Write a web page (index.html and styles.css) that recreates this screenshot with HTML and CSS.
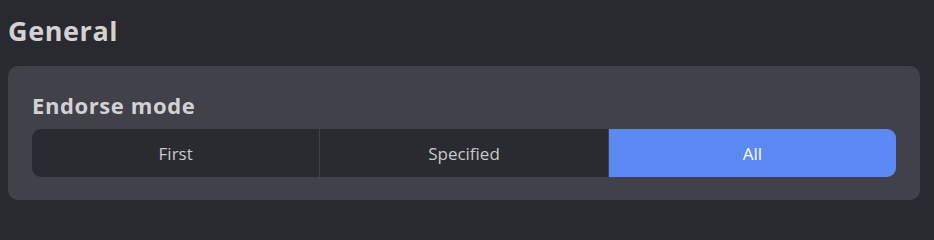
FILE: index.html
```html
<!DOCTYPE html>
<html>
<head>
<meta charset="utf-8">
<link rel="stylesheet" href="styles.css">
</head>
<body>
<div class="page">
  <h1 class="title">General</h1>
  <section class="card">
    <h2 class="label">Endorse mode</h2>
    <div class="seg">
      <button class="seg-item">First</button>
      <button class="seg-item">Specified</button>
      <button class="seg-item active">All</button>
    </div>
  </section>
</div>
</body>
</html>
```

FILE: styles.css
```css
html, body {
  margin: 0;
  padding: 0;
  background: #292a2f;
}
.page {
  padding: 14px 14px 0 8px;
  display: flex;
  flex-direction: column;
}
.title {
  margin: 0;
  font-family: "Open Sans", "Noto Sans", sans-serif;
  font-weight: 700;
  font-size: 27px;
  line-height: 34px;
  letter-spacing: 0.6px;
  color: #d2d2d4;
}
.card {
  margin-top: 18px;
  background: #41414a;
  border-radius: 10px;
  padding: 24px 24px 23px 24px;
}
.label {
  margin: 0 0 8px 0;
  font-family: "Open Sans", "Noto Sans", sans-serif;
  font-weight: 700;
  font-size: 22px;
  line-height: 31px;
  letter-spacing: 0.6px;
  color: #d2d2d4;
}
.seg {
  display: flex;
  gap: 1px;
  height: 48px;
}
.seg-item {
  flex: 1;
  border: none;
  margin: 0;
  padding: 0;
  background: #2a2b30;
  color: #c8c8ca;
  font-family: "Open Sans", "Noto Sans", sans-serif;
  font-size: 17px;
}
.seg-item:first-child {
  border-radius: 9px 0 0 9px;
}
.seg-item:last-child {
  border-radius: 0 9px 9px 0;
}
.seg-item.active {
  background: #5b8af5;
  color: #ffffff;
}
```
